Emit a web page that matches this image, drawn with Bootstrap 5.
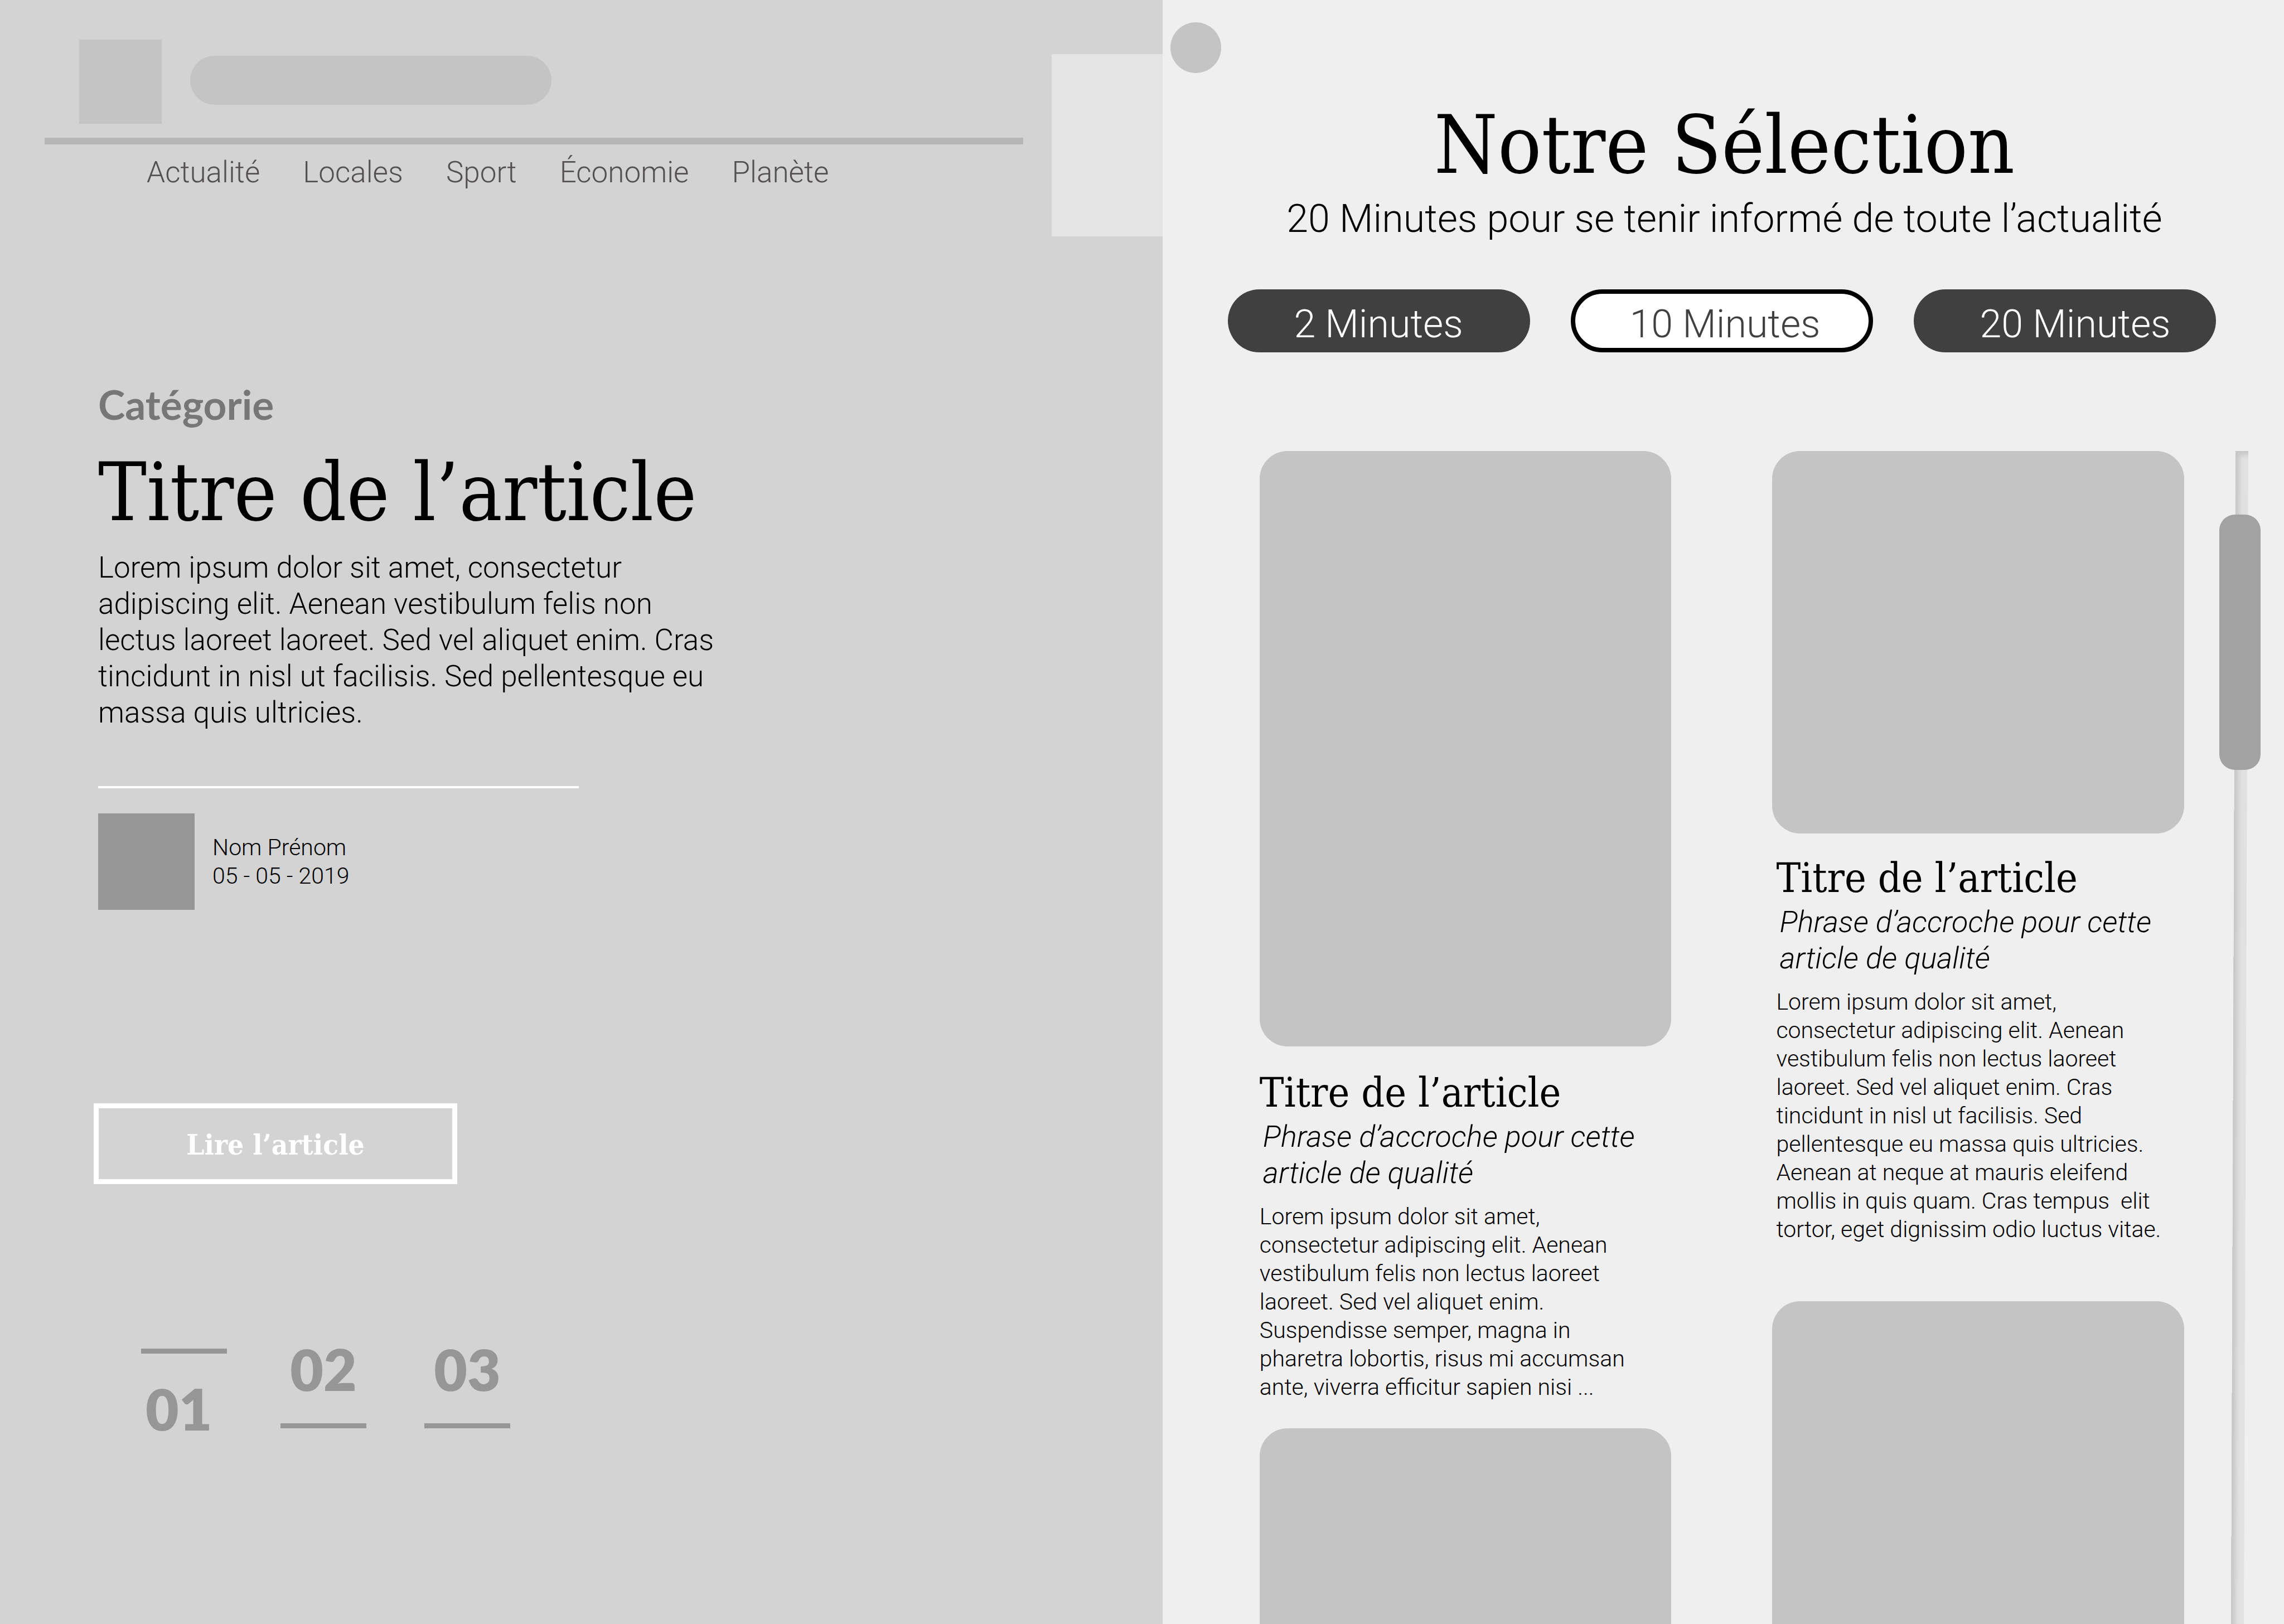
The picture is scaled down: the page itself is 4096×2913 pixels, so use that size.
<!DOCTYPE html>
<html lang="fr">
<head>
<meta charset="utf-8">
<meta name="viewport" content="width=device-width, initial-scale=1">
<title>Notre Sélection</title>
<link href="https://cdn.jsdelivr.net/npm/bootstrap@5.3.0/dist/css/bootstrap.min.css" rel="stylesheet">
<style>
body { font-family: Roboto, "Liberation Sans", sans-serif; font-weight: 300; color: #000; background: #efefef; }
.page { min-height: 100vh; overflow: hidden; }

/* Type scale */
.t-display, .t-title, .t-cta { font-family: "DejaVu Serif Condensed", "DejaVu Serif", serif; font-stretch: condensed; font-weight: 400; margin: 0; white-space: nowrap; }
.t-display { font-size: 145px; line-height: 170px; }
.t-title { font-size: 73px; line-height: 90px; }
.t-cta { font-size: 51px; line-height: 65px; font-weight: 700; }
.t-large { font-size: 70px; line-height: 88px; }
.t-text { font-size: 53px; line-height: 65px; }
.t-hook { font-size: 54px; line-height: 65px; }
.t-small { font-size: 41px; line-height: 51px; }
.t-label { font-family: Lato, sans-serif; font-size: 73px; line-height: 90px; font-weight: 700; color: #777; }
.t-number { font-family: Lato, sans-serif; font-size: 103px; line-height: 72px; font-weight: 800; color: #969696; }

/* Featured article */
.feature { flex: 0 0 50.9%; background: #d3d3d3; }
.brand { padding: 71px 0 0 142px; gap: 51px; }
.logo { width: 148px; height: 151px; background: #c4c4c4; }
.search, .search:focus { width: 648px; height: 88px; margin-top: 29px; background: #c4c4c4; border: 0; box-shadow: none; font-size: 41px; }
.rule { height: 12px; margin: 25px 51px 0 80px; background: #b6b6b6; }
.menu { gap: 77px; padding: 18px 0 0 263px; }
.menu a { color: #545050; text-decoration: none; }
.side-panel { width: 199px; height: 327px; margin-top: 97px; background: #e4e4e4; }
.lead-story { padding: 256px 0 0 176px; }
.lead-title { margin: 28px 0 18px; }
.thin-rule { width: 862px; height: 4px; margin: 99px 0 45px; background: #fff; }
.avatar { width: 173px; height: 173px; background: #969696; }
.author { gap: 32px; }
.read { width: 652px; height: 145px; margin: 347px 0 0 -8px; padding: 10px 0 6px; border: 9px solid #fff; border-radius: 0; color: #fff; }
.pager { gap: 96px; padding: 295px 0 0 77px; }
.pager a { width: 154px; gap: 62px; text-decoration: none; }
.dash { height: 9px; background: #969696; }

/* Selection */
.selection { min-width: 0; }
.dot { width: 91px; height: 91px; margin: 40px 0 44px 14px; background: #c4c4c4; }
.tagline { margin: 3px 0 83px 4px; }
.filters { gap: 73px; padding-right: 4px; }
.filter { width: 542px; height: 113px; padding: 10px 0 0 118px; border: 0; background: #404040; color: #fff; font-weight: 300; }
.filter.active { background: #fff; color: #404040; padding: 10px 0 0 97px; border: 8px solid #000; }
.board { padding: 177px 42px 0 174px; gap: 63px; }
.columns { gap: 181px; }
.story-column { flex: 1 1 0; min-width: 0; }
.thumb { background: #c4c4c4; border-radius: 50px; }
.thumb-tall { height: 1068px; margin-bottom: 38px; }
.thumb-wide { height: 686px; margin-bottom: 35px; }
.thumb-cut { min-height: 200px; border-radius: 50px 50px 0 0; }
.hook { margin: 1px 0 21px 6px; font-style: italic; }
.inset { padding: 0 0 103px 7px; }
.scroller { width: 74px; }
.track { width: 23px; height: 100%; margin-left: 29px; background: #e1e1e1; box-shadow: inset 7px 7px 8px rgba(0,0,0,.12); transform: skewX(-.22deg); transform-origin: top; }
.handle { top: 114px; width: 74px; height: 458px; border-radius: 28px; background: #a2a2a2; }
</style>
</head>
<body>
<div class="page d-flex">
  <section class="feature d-flex flex-column">
    <header class="d-flex">
      <div class="flex-grow-1">
        <div class="brand d-flex align-items-start">
          <div class="logo"></div>
          <input class="search form-control rounded-pill" type="search" aria-label="Rechercher">
        </div>
        <div class="rule"></div>
        <nav class="menu t-text d-flex">
          <a href="#">Actualité</a>
          <a href="#">Locales</a>
          <a href="#">Sport</a>
          <a href="#">Économie</a>
          <a href="#">Planète</a>
        </nav>
      </div>
      <div class="side-panel"></div>
    </header>
    <article class="lead-story">
      <div class="t-label">Catégorie</div>
      <h1 class="t-display lead-title">Titre de l’article</h1>
      <p class="t-text text-nowrap mb-0">Lorem ipsum dolor sit amet, consectetur<br>adipiscing elit. Aenean vestibulum felis non<br>lectus laoreet laoreet. Sed vel aliquet enim. Cras<br>tincidunt in nisl ut facilisis. Sed pellentesque eu<br>massa quis ultricies.</p>
      <div class="thin-rule"></div>
      <div class="author d-flex align-items-center">
        <div class="avatar"></div>
        <div class="t-small">Nom Prénom<br>05 - 05 - 2019</div>
      </div>
      <button type="button" class="read btn t-cta d-block">Lire l’article</button>
      <nav class="pager d-flex" aria-label="Articles">
        <a href="#" class="d-flex flex-column t-number"><span class="dash"></span><span class="ps-2">01</span></a>
        <a href="#" class="d-flex flex-column t-number text-center"><span>02</span><span class="dash"></span></a>
        <a href="#" class="d-flex flex-column t-number text-center ms-2"><span>03</span><span class="dash"></span></a>
      </nav>
    </article>
  </section>

  <main class="selection flex-grow-1 d-flex flex-column">
    <div class="dot rounded-circle"></div>
    <h2 class="t-display text-center ps-1">Notre Sélection</h2>
    <p class="tagline t-large text-center text-nowrap">20 Minutes pour se tenir informé de toute l’actualité</p>
    <div class="filters d-flex justify-content-center">
      <button type="button" class="filter t-large rounded-pill text-start">2 Minutes</button>
      <button type="button" class="filter active t-large rounded-pill text-start">10 Minutes</button>
      <button type="button" class="filter t-large rounded-pill text-start">20 Minutes</button>
    </div>
    <div class="board d-flex flex-grow-1">
      <div class="columns d-flex flex-grow-1">
        <div class="story-column d-flex flex-column">
          <article>
            <div class="thumb thumb-tall"></div>
            <h3 class="t-title">Titre de l’article</h3>
            <p class="hook t-hook text-nowrap">Phrase d’accroche pour cette<br>article de qualité</p>
            <p class="t-small text-nowrap mb-5">Lorem ipsum dolor sit amet,<br>consectetur adipiscing elit. Aenean<br>vestibulum felis non lectus laoreet<br>laoreet. Sed vel aliquet enim.<br>Suspendisse semper, magna in<br>pharetra lobortis, risus mi accumsan<br>ante, viverra efficitur sapien nisi ...</p>
          </article>
          <div class="thumb thumb-cut flex-grow-1"></div>
        </div>
        <div class="story-column d-flex flex-column">
          <article>
            <div class="thumb thumb-wide"></div>
            <div class="inset">
              <h3 class="t-title">Titre de l’article</h3>
              <p class="hook t-hook text-nowrap">Phrase d’accroche pour cette<br>article de qualité</p>
              <p class="t-small text-nowrap mb-0">Lorem ipsum dolor sit amet,<br>consectetur adipiscing elit. Aenean<br>vestibulum felis non lectus laoreet<br>laoreet. Sed vel aliquet enim. Cras<br>tincidunt in nisl ut facilisis. Sed<br>pellentesque eu massa quis ultricies.<br>Aenean at neque at mauris eleifend<br>mollis in quis quam. Cras tempus&nbsp; elit<br>tortor, eget dignissim odio luctus vitae.</p>
            </div>
          </article>
          <div class="thumb thumb-cut flex-grow-1"></div>
        </div>
      </div>
      <div class="scroller position-relative">
        <div class="track"></div>
        <div class="handle position-absolute start-0"></div>
      </div>
    </div>
  </main>
</div>
<script src="https://cdn.jsdelivr.net/npm/bootstrap@5.3.0/dist/js/bootstrap.bundle.min.js"></script>
</body>
</html>
